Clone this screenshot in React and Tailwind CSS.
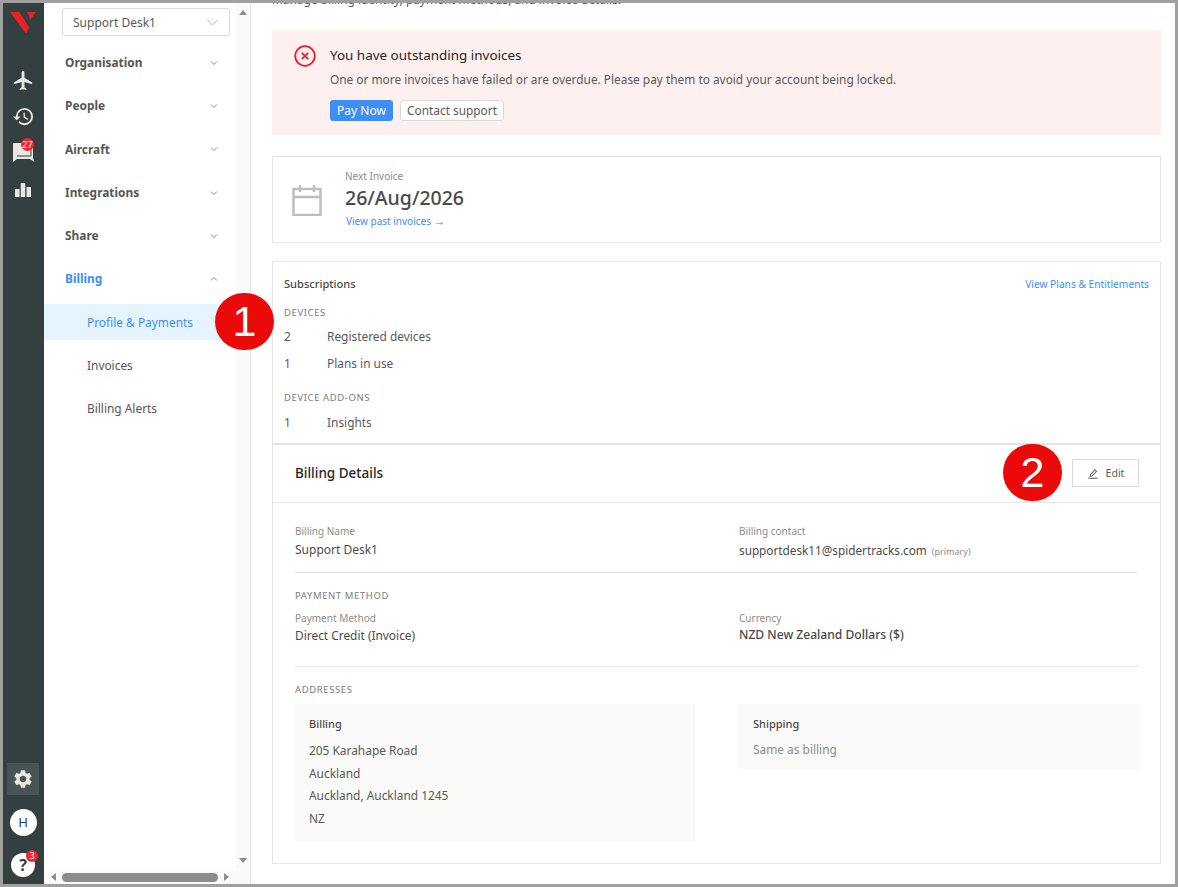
import React from 'react'
import { MdFlight, MdHistory, MdSettings } from 'react-icons/md'
import { AiOutlineEdit } from 'react-icons/ai'

const menu = ['Organisation', 'People', 'Aircraft', 'Integrations', 'Share']

const Chevron = ({ up }) => (
  <svg width="8" height="6" viewBox="0 0 8 6" fill="none" stroke="#8a8a8a" strokeWidth="1" className={up ? 'rotate-180' : ''}>
    <path d="M1 1.5 L4 4.5 L7 1.5" />
  </svg>
)

const Arrow = ({ d }) => (
  <svg width="10" height="10" viewBox="0 0 10 10" fill="#8c8c8c"><path d={d} /></svg>
)

const Label = ({ children }) => (
  <div className="text-[10px] leading-[14px] text-[#8c8c8c]">{children}</div>
)

const Section = ({ children }) => (
  <div className="text-[9.5px] leading-[14px] tracking-[0.6px] text-[#7d7d7d]">{children}</div>
)

const Marker = ({ n, className }) => (
  <div className={`absolute flex h-[57px] w-[59px] items-center justify-center rounded-full bg-[#ea0a0a] text-[43px] text-white font-['Liberation_Sans',sans-serif] ${className}`}>
    {n}
  </div>
)

const Rail = () => (
  <div className="flex w-[41px] shrink-0 flex-col items-center bg-[#343f3f] pr-[1px]">
    <svg width="26" height="21" viewBox="0 0 26 21" className="mt-[9px]" fill="#ea2028">
      <path d="M0 0 H9.300 L19.300 15.700 L16.300 21 L15.300 20.700 Z" />
      <path d="M16.700 0 H26 L20 8 Q19 3 16.700 0 Z" />
    </svg>
    <MdFlight className="mt-[36px] text-[#e9e7e3]" size={23} />
    <MdHistory className="mt-[13px] text-[#e9e7e3]" size={23} />
    <div className="relative ml-[2px] mt-[13px] h-[22px] w-[22px]">
      <svg width="22" height="20" viewBox="0 0 22 20" fill="#e9e7e3" className="mt-[2px]">
        <path d="M0 0 H20 V15 L21.500 19 L17 16 H4 L0 19 Z" />
        <path d="M4 13 H18 V6" fill="none" stroke="#343f3f" strokeWidth="1" />
      </svg>
      <span className="absolute left-[8px] top-[-3px] flex h-[13px] w-[13px] items-center justify-center rounded-full bg-[#f5222d] text-[9px] text-white">27</span>
    </div>
    <svg width="16" height="16" viewBox="0 0 16 16" fill="#e9e7e3" className="mt-[19px]">
      <rect x="0" y="7" width="4.500" height="8" />
      <rect x="5.700" y="1" width="4.500" height="14" />
      <rect x="11.500" y="5" width="4.500" height="10" />
    </svg>
    <div className="mt-auto flex h-[32px] w-[32px] items-center justify-center bg-[#485353]">
      <MdSettings className="text-[#e9e7e3]" size={22} />
    </div>
    <div className="mt-[14px] flex h-[27px] w-[27px] items-center justify-center rounded-full bg-white text-[13px] text-[#1c3f6e]">H</div>
    <div className="relative mb-[7px] mt-[17px] flex h-[24px] w-[24px] items-center justify-center rounded-full bg-white text-[16px] font-bold text-[#343f3f]">
      ?
      <span className="absolute right-[-3px] top-[-3px] flex h-[12px] w-[12px] items-center justify-center rounded-full bg-[#f5222d] text-[9px] font-normal text-white">3</span>
    </div>
  </div>
)

const Sidebar = () => (
  <div className="flex w-[207px] shrink-0 flex-col border-r border-[#e4e4e4]">
    <div className="flex min-h-0 flex-1">
      <div className="w-[192px] shrink-0">
        <div className="ml-[18px] mt-[5px] flex h-[28px] w-[168px] items-center justify-between rounded-[3px] border border-[#d9d9d9] pl-[10px] pr-[11px] pt-[1px] text-[12px] text-[#595959]">
          Support Desk1
          <svg width="11" height="7" viewBox="0 0 11 7" fill="none" stroke="#bdbdbd"><path d="M0.5 0.5 L5.500 6 L10.500 0.5" /></svg>
        </div>
        <div className="mt-[5.500px]">
          {menu.map((m) => (
            <div key={m} className="flex h-[43.2px] items-center justify-between pl-[21px] pr-[18px] text-[11.900px] font-bold text-[#565656]">
              {m}
              <Chevron />
            </div>
          ))}
          <div className="flex h-[43.2px] items-center justify-between pl-[21px] pr-[18px] text-[11.900px] font-bold text-[#3e8ef7]">
            Billing
            <Chevron up />
          </div>
        </div>
        <div className="mt-[3.500px] flex h-[36px] items-center bg-[#e6f4ff] pl-[43px] pt-[1px] text-[11.900px] text-[#3e8ef7]">Profile &amp; Payments</div>
        <div className="mt-[7px] flex h-[36px] items-center pl-[43px] pt-[1px] text-[11.900px] text-[#565656]">Invoices</div>
        <div className="mt-[7px] flex h-[36px] items-center pl-[43px] pt-[1px] text-[11.900px] text-[#565656]">Billing Alerts</div>
      </div>
      <div className="flex w-[14px] flex-col items-center justify-between bg-[#fafafa] py-[4px]">
        <Arrow d="M1 8 L5 3 L9 8 Z" />
        <Arrow d="M1 2 L9 2 L5 7 Z" />
      </div>
    </div>
    <div className="flex h-[14px] items-center bg-[#fafafa] pl-[5px] pr-[19px]">
      <Arrow d="M7 1 V9 L2 5 Z" />
      <div className="mx-[3px] h-[9px] flex-1 rounded-full bg-[#8c8c8c]" />
      <Arrow d="M3 1 V9 L8 5 Z" />
    </div>
  </div>
)

const Banner = () => (
  <div className="mt-[24px] flex h-[105px] bg-[#fff0f0] pl-[22px] pt-[14px]">
    <svg width="22" height="22" viewBox="0 0 22 22" fill="none" stroke="#e8222c" strokeWidth="1.800" className="mt-[1px] shrink-0">
      <circle cx="11" cy="11" r="9.800" />
      <path d="M7.800 7.800 L14.200 14.200 M14.200 7.800 L7.800 14.200" />
    </svg>
    <div className="ml-[14px]">
      <div className="text-[13.450px] leading-[22px] text-[#262626]">You have outstanding invoices</div>
      <div className="mt-[3px] text-[11.870px] leading-[20px] text-[#595959]">
        One or more invoices have failed or are overdue. Please pay them to avoid your account being locked.
      </div>
      <div className="mt-[11px] flex gap-[7px]">
        <button className="h-[21px] w-[63px] rounded-[3px] bg-[#3e8ef7] text-[12px] text-white">Pay Now</button>
        <button className="h-[21px] w-[104px] rounded-[3px] border border-[#d9d9d9] bg-white text-[11.850px] text-[#595959]">Contact support</button>
      </div>
    </div>
  </div>
)

const NextInvoice = () => (
  <div className="mt-[21px] flex h-[87px] items-center border border-[#e4e4e4] pl-[19px]">
    <svg width="30" height="32" viewBox="0 0 30 32" fill="none" stroke="#bdbdbd" strokeWidth="2.400" className="shrink-0">
      <rect x="1.500" y="5" width="27" height="26" />
      <path d="M1.500 13 H28.500 M8 1 V8 M22 1 V8" />
    </svg>
    <div className="ml-[23px] pb-[2px]">
      <div className="text-[10px] leading-[14px] text-[#8c8c8c]">Next Invoice</div>
      <div className="mt-[2px] text-[19.500px] font-medium leading-[26px] text-[#4a4a4a]">26/Aug/2026</div>
      <div className="mt-[2px] pl-[1px] text-[10px] leading-[16px] text-[#3e8ef7]">View past invoices <span className="text-[12px] font-['Liberation_Sans',sans-serif]">→</span></div>
    </div>
  </div>
)

const Row = ({ n, text, className }) => (
  <div className={`flex text-[11.900px] leading-[18px] text-[#595959] ${className}`}>
    <span className="w-[43px]">{n}</span>
    {text}
  </div>
)

const Subscriptions = () => (
  <div className="flex h-[182px] flex-col border border-b-0 border-[#e4e4e4] px-[11px] pt-[13px]">
    <div className="flex items-center justify-between">
      <span className="text-[11.100px] font-medium leading-[18px] text-[#4a4a4a]">Subscriptions</span>
      <span className="text-[10.200px] leading-[18px] text-[#3e8ef7]">View Plans &amp; Entitlements</span>
    </div>
    <div className="mt-[13px]"><Section>DEVICES</Section></div>
    <Row n="2" text="Registered devices" className="mt-[7px]" />
    <Row n="1" text="Plans in use" className="mt-[9px]" />
    <div className="mt-[19px]"><Section>DEVICE ADD-ONS</Section></div>
    <Row n="1" text="Insights" className="mt-[8px]" />
  </div>
)

const Address = ({ title, children, className }) => (
  <div className={`bg-[#fafaf8] px-[14px] pt-[12px] ${className}`}>
    <div className="text-[11px] font-medium leading-[16px] text-[#4a4a4a]">{title}</div>
    {children}
  </div>
)

const BillingDetails = () => (
  <div className="h-[421px] border border-t-2 border-[#e4e4e4]">
    <div className="flex h-[58px] items-center justify-between border-b border-[#e4e4e4] pb-[1px] pl-[22px] pr-[21px]">
      <span className="text-[13.500px] font-medium text-[#262626]">Billing Details</span>
      <button className="flex h-[28px] w-[67px] items-center justify-center gap-[7px] border border-[#d9d9d9] pt-[1px] text-[10.500px] text-[#595959]">
        <AiOutlineEdit size={12} />
        Edit
      </button>
    </div>
    <div className="px-[22px] pt-[21px]">
      <div className="grid grid-cols-[444px_1fr] border-b border-[#e4e4e4] pb-[10px]">
        <div>
          <Label>Billing Name</Label>
          <div className="mt-[2px] text-[12px] leading-[20px] text-[#4a4a4a]">Support Desk1</div>
        </div>
        <div>
          <Label>Billing contact</Label>
          <div className="mt-[2px] text-[11.750px] leading-[20px] text-[#4a4a4a]">
            supportdesk11@spidertracks.com <span className="ml-[2px] text-[9px] text-[#8c8c8c]">(primary)</span>
          </div>
        </div>
      </div>
      <div className="mt-[16px]"><Section>PAYMENT METHOD</Section></div>
      <div className="mt-[8px] grid grid-cols-[444px_1fr] border-b border-[#e4e4e4] pb-[21px]">
        <div>
          <Label>Payment Method</Label>
          <div className="text-[11.900px] leading-[20px] text-[#4a4a4a]">Direct Credit (Invoice)</div>
        </div>
        <div>
          <Label>Currency</Label>
          <div className="text-[12.100px] font-medium leading-[20px] text-[#4a4a4a]">NZD New Zealand Dollars ($)</div>
        </div>
      </div>
      <div className="mt-[16px]"><Section>ADDRESSES</Section></div>
      <div className="mt-[7px] grid grid-cols-[400px_401px] items-start gap-[43px]">
        <Address title="Billing" className="h-[137px]">
          <div className="mt-[7px] text-[11.900px] leading-[22.700px] text-[#595959]">
            <div>205 Karahape Road</div>
            <div>Auckland</div>
            <div>Auckland, Auckland 1245</div>
            <div>NZ</div>
          </div>
        </Address>
        <Address title="Shipping" className="h-[65px] px-[15px]">
          <div className="mt-[7px] text-[11.900px] leading-[20px] text-[#8c8c8c]">Same as billing</div>
        </Address>
      </div>
    </div>
  </div>
)

const App = () => {
  return (
    <div className="relative flex h-[887px] w-[1178px] overflow-hidden border-[3px] border-[#a0a0a0] bg-white font-['Noto_Sans',sans-serif]">
      <Rail />
      <Sidebar />
      <div className="min-w-0 flex-1 overflow-hidden pl-[21px] pr-[14px]">
        <div className="mt-[-10px] text-[11.900px] leading-[13px] text-[#595959]">Manage billing identity, payment methods, and invoice details.</div>
        <Banner />
        <NextInvoice />
        <div className="mt-[18px]">
          <Subscriptions />
          <BillingDetails />
        </div>
      </div>
      <Marker n="1" className="left-[212px] top-[290px]" />
      <Marker n="2" className="left-[1000px] top-[441px]" />
    </div>
  )
}

export default App
